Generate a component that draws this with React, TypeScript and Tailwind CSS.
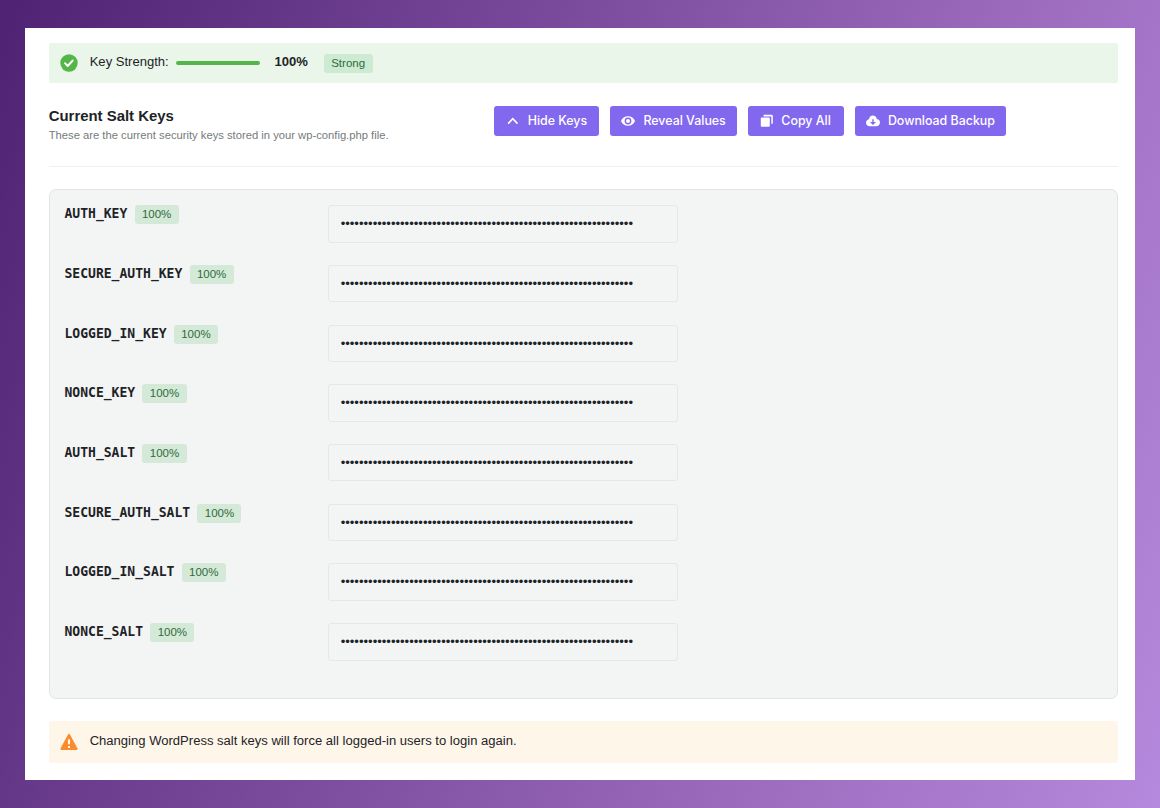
import { ReactNode } from 'react';

interface SaltKey {
  name: string;
  strength: number;
}

const saltKeys: SaltKey[] = [
  { name: 'AUTH_KEY', strength: 100 },
  { name: 'SECURE_AUTH_KEY', strength: 100 },
  { name: 'LOGGED_IN_KEY', strength: 100 },
  { name: 'NONCE_KEY', strength: 100 },
  { name: 'AUTH_SALT', strength: 100 },
  { name: 'SECURE_AUTH_SALT', strength: 100 },
  { name: 'LOGGED_IN_SALT', strength: 100 },
  { name: 'NONCE_SALT', strength: 100 },
];

const MASKED_VALUE = '•'.repeat(64);

function CheckCircleIcon() {
  return (
    <svg className="w-[18px] h-[18px] shrink-0" viewBox="0 0 18 18" fill="none">
      <circle cx="9" cy="9" r="8.7" fill="#54b548" />
      <path d="M5 9.2l2.7 2.8 5-5.5" stroke="#fff" strokeWidth="1.9" strokeLinecap="round" strokeLinejoin="round" />
    </svg>
  );
}

function WarningIcon() {
  return (
    <svg className="w-[18px] h-[18px] shrink-0" viewBox="0 0 18 18">
      <path d="M9 .8c.4 0 .8.2 1 .6l7.4 13.9c.5.9 0 1.7-1 1.7H1.6c-1 0-1.5-.8-1-1.7L8 1.4c.2-.4.6-.6 1-.6z" fill="#fb8c2e" />
      <path d="M8 6.5h2v4.8H8zM8 13h2v2H8z" fill="#fff" />
    </svg>
  );
}

function ChevronUpIcon() {
  return (
    <svg className="w-[14px] h-[14px]" viewBox="0 0 14 14" fill="none">
      <path d="M2.1 9.6L6.8 4.7l4.7 4.9" stroke="currentColor" strokeWidth="1.6" />
    </svg>
  );
}

function EyeIcon() {
  return (
    <svg className="w-[14px] h-[14px]" viewBox="0 0 14 14">
      <path
        fillRule="evenodd"
        fill="currentColor"
        d="M7 2.200c3.300 0 5.900 2 7 4.800-1.100 2.800-3.700 4.800-7 4.800S1.100 9.800 0 7c1.100-2.800 3.700-4.800 7-4.800zM7 3.600a3.400 3.400 0 1 0 0 6.800 3.400 3.400 0 0 0 0-6.800zM7 5a2 2 0 1 1 0 4 2 2 0 0 1 0-4z"
      />
    </svg>
  );
}

function CopyIcon() {
  return (
    <svg className="w-[14px] h-[14px]" viewBox="0 0 14 14" fill="currentColor">
      <rect x="1.8" y="3.6" width="9" height="9.2" rx="1" />
      <path d="M4.600 .8h8a1.200 1.200 0 0 1 1.200 1.200V9.800h-1.500V2.400H4.600z" />
    </svg>
  );
}

function CloudDownloadIcon() {
  return (
    <svg className="w-[14px] h-[14px]" viewBox="0 0 14 14">
      <path
        fillRule="evenodd"
        fill="currentColor"
        d="M6.900 1.500c2.100 0 3.600 1.400 3.900 3.400A3.700 3.700 0 0 1 14 8.600c0 2.200-1.700 3.700-3.800 3.700H3.700C1.600 12.300 0 10.800 0 8.800c0-1.700 1.200-3.100 2.900-3.500C3.300 3.100 4.800 1.500 6.900 1.500zM6.300 5.200v2.700H4L7 10.900l3-3H7.700V5.200z"
      />
    </svg>
  );
}

function ActionButton({ icon, label, className }: { icon: ReactNode; label: string; className: string }) {
  return (
    <button
      className={`flex h-[30px] items-center gap-2 rounded-[3px] bg-[#8267ef] pl-[11.200px] font-[Inter,sans-serif] text-[12.400px] font-medium whitespace-nowrap text-white ${className}`}
    >
      {icon}
      {label}
    </button>
  );
}

function KeyRow({ item }: { item: SaltKey }) {
  return (
    <div className="flex h-[59.730px] items-start">
      <div className="flex w-[263.500px] items-start">
        <span className="inline-block scale-y-[1.07] font-['DejaVu_Sans_Mono',monospace] text-[13.060px] leading-[18px] font-bold">
          {item.name}
        </span>
        <span className="ml-[7.300px] h-[19px] rounded-[3px] bg-[#d4e9d7] px-[7.300px] text-[11.500px] leading-[19px] text-[#2f6b3a]">
          {item.strength}%
        </span>
      </div>
      <div className="h-[37.330px] w-[350px] rounded-[3px] border border-[#e4e8e7] px-[11.700px] text-[13.060px] leading-[36px]">
        {MASKED_VALUE}
      </div>
    </div>
  );
}

export default function App() {
  return (
    <div className="h-[808px] w-[1160px] bg-[linear-gradient(110deg,#4f2274_0%,#9b6abd_70%,#b589dd_100%)] px-[25px] pt-[28px] font-['Liberation_Sans',Arial,sans-serif] text-[#1d2327]">
      <div className="h-[752px] bg-white pt-[15px] pr-[16.700px] pl-[23.700px]">
        {/* Key strength */}
        <div className="flex h-[40.300px] items-center rounded-[2px] bg-[#eaf6ea] pl-[11.300px]">
          <CheckCircleIcon />
          <span className="ml-[11.700px] -mt-[2px] text-[13.060px]">Key Strength:</span>
          <div className="ml-[7.500px] h-[4px] w-[84px] rounded-[2px] bg-[#54b548]" />
          <span className="ml-[14.300px] -mt-[2px] text-[13.060px] font-bold">100%</span>
          <span className="ml-[15.800px] h-[19px] rounded-[3px] bg-[#cdebd2] px-[7.500px] text-[11.500px] leading-[19px] text-[#2f6b3a]">
            Strong
          </span>
        </div>

        {/* Header */}
        <div className="flex h-[83.700px] border-b border-[#eff0f1] pt-[22.700px]">
          <div className="w-[445.800px]">
            <h2 className="text-[14.930px] leading-[20px] font-bold">Current Salt Keys</h2>
            <p className="text-[11.220px] leading-[18px] text-[#757b7a]">
              These are the current security keys stored in your wp-config.php file.
            </p>
          </div>
          <div className="flex gap-[11.200px]">
            <ActionButton icon={<ChevronUpIcon />} label="Hide Keys" className="w-[104.600px]" />
            <ActionButton icon={<EyeIcon />} label="Reveal Values" className="w-[126.700px]" />
            <ActionButton icon={<CopyIcon />} label="Copy All" className="w-[95.400px]" />
            <ActionButton icon={<CloudDownloadIcon />} label="Download Backup" className="w-[151.200px]" />
          </div>
        </div>

        {/* Keys */}
        <div className="mt-[22.300px] h-[509.700px] rounded-[7px] border border-[#e2e5e6] bg-[#f3f5f4] pt-[14.900px] pl-[14.800px]">
          {saltKeys.map((item) => (
            <KeyRow key={item.name} item={item} />
          ))}
        </div>

        {/* Warning */}
        <div className="mt-[22.300px] flex h-[41.700px] items-center rounded-[2px] bg-[#fff6ea] pl-[11.300px]">
          <WarningIcon />
          <span className="ml-[11.700px] -mt-[2px] text-[13.060px]">
            Changing WordPress salt keys will force all logged-in users to login again.
          </span>
        </div>
      </div>
    </div>
  );
}
